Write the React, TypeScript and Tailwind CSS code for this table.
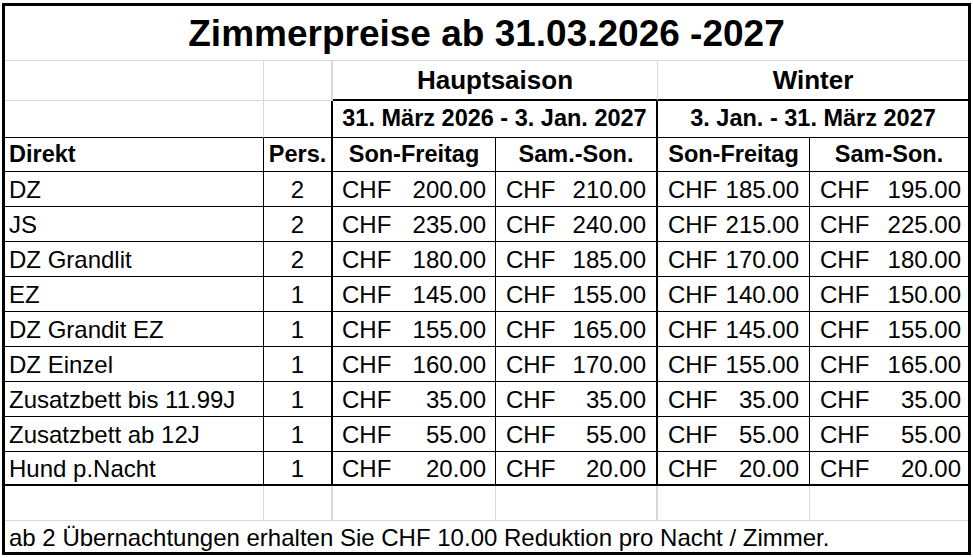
import React from "react";

const rows: [string, number, string, string, string, string][] = [
  ["DZ", 2, "200.00", "210.00", "185.00", "195.00"],
  ["JS", 2, "235.00", "240.00", "215.00", "225.00"],
  ["DZ Grandlit", 2, "180.00", "185.00", "170.00", "180.00"],
  ["EZ", 1, "145.00", "155.00", "140.00", "150.00"],
  ["DZ Grandit EZ", 1, "155.00", "165.00", "145.00", "155.00"],
  ["DZ Einzel", 1, "160.00", "170.00", "155.00", "165.00"],
  ["Zusatzbett bis 11.99J", 1, "35.00", "35.00", "35.00", "35.00"],
  ["Zusatzbett ab 12J", 1, "55.00", "55.00", "55.00", "55.00"],
  ["Hund p.Nacht", 1, "20.00", "20.00", "20.00", "20.00"],
];

const GRID = "grid grid-cols-[259px_69px_163px_162px_152px_158px]";

function Price({ v, cls }: { v: string; cls: string }) {
  return (
    <div className={`flex items-center justify-between ${cls}`}>
      <span>CHF</span>
      <span>{v}</span>
    </div>
  );
}

export default function App() {
  return (
    <div className="w-[973px] h-[558px] bg-white text-black font-['Liberation_Sans',Arial,sans-serif] pt-[3px] pl-[2px]">
      <div className="w-[969px] h-[552px] border-[3px] border-black flex flex-col">
        {/* Title */}
        <div className="h-[55px] border-b border-[#d9d9d9] flex items-center justify-center">
          <span className="text-[37px] font-bold leading-none">Zimmerpreise ab 31.03.2026 -2027</span>
        </div>
        {/* Season row */}
        <div className={`${GRID} h-[40px]`}>
          <div className="border-r border-b border-[#d9d9d9]" />
          <div className="border-r-2 border-b border-[#d9d9d9]" />
          <div className="col-span-2 border-r border-r-[#d9d9d9] border-b-2 border-b-black flex items-center justify-center text-[26px] font-bold leading-none">
            Hauptsaison
          </div>
          <div className="col-span-2 border-b-2 border-black flex items-center justify-center text-[26px] font-bold leading-none">
            Winter
          </div>
        </div>
        {/* Dates row */}
        <div className={`${GRID} h-[37px]`}>
          <div className="border-r border-r-[#d9d9d9] border-b border-b-black" />
          <div className="border-r-2 border-b border-black" />
          <div className="col-span-2 border-r-2 border-b border-black flex items-center justify-center text-[23.5px] font-bold leading-none">
            31. März 2026 - 3. Jan. 2027
          </div>
          <div className="col-span-2 border-b border-black flex items-center justify-center text-[23.5px] font-bold leading-none">
            3. Jan. - 31. März 2027
          </div>
        </div>
        {/* Header row */}
        <div className={`${GRID} h-[34px] text-[23.5px] font-bold leading-none`}>
          <div className="border-r border-b border-black flex items-center pl-[4px] pt-[1px]">Direkt</div>
          <div className="border-r-2 border-b border-black flex items-center justify-center pt-[1px]">Pers.</div>
          <div className="border-r border-b border-black flex items-center justify-center pt-[1px]">Son-Freitag</div>
          <div className="border-r-2 border-b border-black flex items-center justify-center pt-[1px]">Sam.-Son.</div>
          <div className="border-r border-b border-black flex items-center justify-center pt-[1px]">Son-Freitag</div>
          <div className="border-b border-black flex items-center justify-center pt-[1px]">Sam-Son.</div>
        </div>
        {/* Data rows */}
        {rows.map((r, i) => {
          const last = i === rows.length - 1;
          const b = last ? "border-b-2" : "border-b";
          return (
            <div key={r[0]} className={`${GRID} ${last ? "h-[34px]" : "h-[35px]"} text-[24px] leading-none`}>
              <div className={`border-r ${b} border-black flex items-center pl-[4px] pt-[2px]`}>{r[0]}</div>
              <div className={`border-r-2 ${b} border-black flex items-center justify-center pt-[2px]`}>{r[1]}</div>
              <Price v={r[2]} cls={`border-r ${b} border-black pl-[9px] pr-[9px] pt-[2px]`} />
              <Price v={r[3]} cls={`border-r-2 ${b} border-black pl-[10px] pr-[10px] pt-[2px]`} />
              <Price v={r[4]} cls={`border-r ${b} border-black pl-[10px] pr-[10px] pt-[2px]`} />
              <Price v={r[5]} cls={`${b} border-black pl-[10px] pr-[7px] pt-[2px]`} />
            </div>
          );
        })}
        {/* Empty row */}
        <div className={`${GRID} h-[35px]`}>
          <div className="border-r border-b border-[#d9d9d9]" />
          <div className="border-r-2 border-b border-[#d9d9d9]" />
          <div className="border-r border-b border-[#d9d9d9]" />
          <div className="border-r-2 border-b border-[#d9d9d9]" />
          <div className="border-r border-b border-[#d9d9d9]" />
          <div className="border-b border-[#d9d9d9]" />
        </div>
        {/* Footer */}
        <div className="flex-1 flex items-center pl-[4px] text-[24px] leading-none pt-[3px]">
          ab 2 Übernachtungen erhalten Sie CHF 10.00 Reduktion pro Nacht / Zimmer.
        </div>
      </div>
    </div>
  );
}
